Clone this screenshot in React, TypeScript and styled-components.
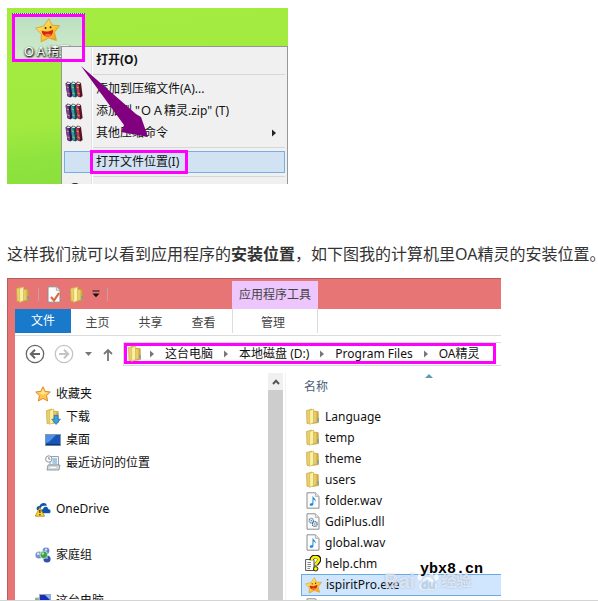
import React, { ReactNode } from "react";
import styled, { createGlobalStyle } from "styled-components";

const GlobalStyle = createGlobalStyle`
  * { box-sizing: border-box; }
  body {
    margin: 0;
    background: #fff;
    font-family: "Noto Sans", "Noto Sans CJK SC", sans-serif;
  }
  button { font: inherit; color: inherit; border: 0; background: none; padding: 0; margin: 0; text-align: left; }
  a { color: inherit; text-decoration: none; }
  svg { display: block; flex: none; }
`;

const Page = styled.main`
  height: 100vh;
  overflow: hidden;
  padding: 8px 0 0 7px;
  border-bottom: 1px solid #d4d4d4;
`;

const Paragraph = styled.p`
  margin: 58px 0 11px;
  font-size: 16px;
  line-height: 25px;
  color: #333;
  white-space: nowrap;
`;

/* Desktop with context menu */

const Desktop = styled.figure`
  position: relative;
  margin: 0;
  max-width: 281px;
  height: 176px;
  overflow: hidden;
  padding: 38px 0 0 54px;
  background: linear-gradient(172deg, #a5ec41 0%, #a3ea40 55%, #8fe33e 72%, #88dd3b 100%);
`;

const DesktopIcon = styled.div`
  position: absolute;
  left: 5px;
  top: 5px;
  width: 73px;
  height: 49px;
  padding: 4px 0 0 23px;
  background: linear-gradient(#b9dfc0, #d3edce);
  border-top: 1px dotted #3d6c86;
  color: #fff;
  font-size: 12px;
  line-height: 18px;
  white-space: nowrap;
  text-shadow: 0 1px 2px #000, 1px 1px 2px #000;
`;

const DesktopLabel = styled.div`
  margin-left: -12px;
`;

const Menu = styled.div`
  position: relative;
  height: 160px;
  padding: 2px;
  border: 1px solid #979797;
  background: linear-gradient(to right, transparent 29px, #e0e0e0 29px, #e0e0e0 30px, #fff 30px, #fff 31px, transparent 31px) #f0f0f0;
  font-size: 12px;
  color: #111;
`;

const MenuItem = styled.button<{ $active?: boolean; $strong?: boolean }>`
  display: grid;
  grid-template-columns: 26px 1fr 12px;
  align-items: center;
  width: 100%;
  height: 22px;
  line-height: 20px;
  white-space: nowrap;
  font-weight: ${(p) => (p.$strong ? 700 : 400)};
  border: 1px solid ${(p) => (p.$active ? "#78aee5" : "transparent")};
  background: ${(p) => (p.$active ? "#d1e2f2" : "none")};
`;

const MenuText = styled.span`
  padding-left: 5px;
`;

const MenuRule = styled.hr`
  height: 1px;
  margin: 3px 0 3px 29px;
  border: 0;
  background: #d7d7d7;
`;

const Highlight = styled.div<{ $x: number; $y: number; $w: number; $h: number }>`
  position: absolute;
  left: ${(p) => p.$x}px;
  top: ${(p) => p.$y}px;
  width: ${(p) => p.$w}px;
  height: ${(p) => p.$h}px;
  border: 3px solid #ff00ff;
  pointer-events: none;
`;

const ArrowLayer = styled.svg`
  position: absolute;
  left: 0;
  top: 0;
  pointer-events: none;
`;

/* Explorer window */

const Explorer = styled.figure`
  position: relative;
  display: flex;
  flex-direction: column;
  margin: 0;
  max-width: 494px;
  height: 340px;
  overflow: hidden;
  padding-left: 8px;
  border-top: 1px solid #b85c5c;
  background: #e87575;
  box-shadow: inset 1px 0 #b85c5c;
  font-size: 12px;
  color: #111;
`;

const TitleBar = styled.header`
  display: flex;
  flex: none;
  height: 30px;
`;

const QuickAccess = styled.div`
  display: flex;
  align-items: center;
  width: 217px;
  gap: 7px;
`;

const Divider = styled.span`
  width: 1px;
  height: 13px;
  background: #c9a0a0;
`;

const ContextTitle = styled.div`
  width: 86px;
  margin-top: 2px;
  line-height: 28px;
  text-align: center;
  background: #ecc6fc;
  color: #444;
`;

const Tabs = styled.nav`
  display: flex;
  flex: none;
  height: 27px;
  background: #fff;
  border-bottom: 1px solid #dadbdc;
  color: #444;
`;

const Tab = styled.button<{ $kind?: "file" | "context" }>`
  width: ${(p) => (p.$kind === "file" ? 56 : p.$kind === "context" ? 86 : 53)}px;
  height: 24px;
  line-height: ${(p) => (p.$kind === "file" ? 24 : 28)}px;
  text-align: center;
  ${(p) => p.$kind === "file" && "background: #1979ca; color: #fff;"}
  ${(p) =>
    p.$kind === "context" &&
    "border: solid #dcdcdc; border-width: 0 1px; margin-left: 2px; padding-right: 4px;"}
`;

const AddressRow = styled.div`
  display: flex;
  flex: none;
  align-items: center;
  height: 37px;
  padding: 0 0 1px 10px;
  background: #fff;
`;

const NavButton = styled.button<{ $w: number }>`
  display: flex;
  justify-content: center;
  width: ${(p) => p.$w}px;
`;

const AddressBox = styled.div`
  flex: 1;
  height: 24px;
  padding-right: 5px;
  border: 1px solid #dadada;
  border-right: 0;
`;

const Breadcrumbs = styled.nav`
  display: flex;
  align-items: center;
  height: 21px;
  border: 3px solid #ff00ff;
  line-height: 15px;
  white-space: nowrap;
`;

const Crumb = styled.a`
  display: flex;
  align-items: center;
  gap: 11px;
  padding-left: 11px;

  &:first-of-type {
    padding-left: 7px;
  }
`;

const Body = styled.div`
  display: flex;
  flex: 1;
  background: #fff;
`;

const Sidebar = styled.nav`
  width: 253px;
  padding: 9px 0 0 20px;
`;

const SideItem = styled.a<{ $child?: boolean; $gap?: boolean }>`
  display: flex;
  align-items: center;
  gap: 5px;
  height: 23px;
  padding-left: ${(p) => (p.$child ? 10 : 0)}px;
  margin-top: ${(p) => (p.$gap ? 23 : 0)}px;
  line-height: 20px;
`;

const ScrollTrack = styled.div`
  width: 15px;
  background: #cdcdcd;
`;

const ScrollButton = styled.button`
  display: flex;
  justify-content: center;
  align-items: center;
  width: 15px;
  height: 17px;
  background: #f0f0f0;
`;

const Files = styled.section`
  flex: 1;
  margin-left: 2px;
  border-left: 1px solid #f2f2f2;
  padding-left: 15px;
`;

const FileHeader = styled.button`
  display: flex;
  gap: 97px;
  width: 100%;
  height: 33px;
  padding-left: 3px;
  line-height: 27px;
  color: #4c607a;
`;

const SortMark = styled.span`
  padding-top: 1px;
`;

const FileRow = styled.a<{ $selected?: boolean }>`
  display: flex;
  align-items: center;
  gap: 4px;
  height: ${(p) => (p.$selected ? 22 : 21)}px;
  padding-left: 3px;
  line-height: 20px;
  border: 1px solid ${(p) => (p.$selected ? "#6aaae4" : "transparent")};
  border-right: 0;
  background: ${(p) => (p.$selected ? "#d0e6ff" : "none")};
`;

const Watermark = styled.div`
  position: absolute;
  left: 377px;
  top: 287px;
  display: flex;
  align-items: flex-end;
  gap: 1px;
  font: 700 20px/24px "Liberation Sans", "Noto Sans CJK SC", sans-serif;
  color: rgba(255, 255, 255, 0.6);
  text-shadow: 0 0 2px rgba(120, 140, 170, 0.6);
  pointer-events: none;
`;

const WatermarkSmall = styled.span`
  font-size: 15px;
`;

const SiteMark = styled.div`
  position: absolute;
  left: 413px;
  top: 281px;
  font: 700 15px/20px "Liberation Mono", monospace;
  color: #000;
  pointer-events: none;
`;

/* Icons */

const STAR = "M9 0.8 11.4 6 17.2 6.8 13 10.8 14.2 16.8 9 14 3.8 16.8 5 10.8 0.8 6.8 6.6 6Z";
const FAT_STAR = "M10 0.6 12.2 5.2 17.6 5.6 14 10.2 15.4 16.2 9.8 14.4 4.4 17.2 4.6 11.4 0.5 7.4 6.4 5.8Z";

const SmileStar = ({ size }: { size: number }) => (
  <svg width={size} height={size} viewBox="0 0 18 18">
    <defs>
      <linearGradient id={"smile" + size} x1="0" y1="0" x2="1" y2="1">
        <stop offset="0" stopColor="#fff08a" />
        <stop offset="0.6" stopColor="#fdc52e" />
        <stop offset="1" stopColor="#ef8a16" />
      </linearGradient>
    </defs>
    <path d={FAT_STAR} fill={`url(#smile${size})`} stroke="#dc9a2c" strokeWidth="0.6" strokeLinejoin="round" />
    <path d="M4.8 9C7.6 10.4 10.6 9.8 13 8.2 13.2 11.4 11.6 13.4 9 13.4 6.6 13.4 4.8 11.4 4.8 9Z" fill="#d3260f" />
    <path d="M6.8 12.1C8 11.2 10.2 11.1 11.8 11.9 10.6 13.7 8.2 13.8 6.8 12.1Z" fill="#ff6a45" />
    <circle cx="7.6" cy="7.2" r="0.7" fill="#43200a" />
    <circle cx="11.2" cy="6.6" r="0.7" fill="#43200a" />
  </svg>
);

const Books = () => (
  <svg width="18" height="17" viewBox="0 0 18 17">
    {[
      ["#7a3f9a", "#33154a", 0],
      ["#2f9aa0", "#0d4c54", 5],
      ["#c03c58", "#551323", 10],
    ].map(([c, d, x]) => (
      <g key={String(x)} transform={`translate(${x} 0)`}>
        <path d="M0.5 2.4 2.8 0.6 6 2 7.6 15 5.4 16.6 2.4 15.2Z" fill={String(d)} />
        <path d="M0.9 2.8 3.6 3.8 5.2 15.8 2.6 14.8Z" fill={String(c)} />
        <path d="M1.4 2.4 3 1.2 5.4 2.2 4 3.3Z" fill="#f4f1e6" />
        <path d="M1.6 6 3.8 6.7M2.4 12 4.6 12.6" stroke="#e2c25a" strokeWidth="0.8" />
      </g>
    ))}
  </svg>
);

const Folder = ({ arrow }: { arrow?: boolean }) => (
  <svg width="16" height="17" viewBox="0 0 16 17">
    <path d="M1.5 2.5 7 1 7 15 2 15.5Z" fill="#e9d06c" stroke="#c9a53c" strokeWidth="0.7" />
    <path d="M8 3 13.2 3.6 13.6 14.6 7.5 15.5Z" fill="#d3ac40" stroke="#bf9735" strokeWidth="0.6" />
    <path d="M4.6 2.6 8.6 1.1 8.6 14.6 4.6 16.4Z" fill="#fbf0a8" stroke="#d6b952" strokeWidth="0.7" />
    <path d="M9 4 11.4 3.5 11.4 13.4 9 14.4Z" fill="#e8cd66" />
    {arrow ? (
      <path d="M9.2 7.2H13V11.2H15.4L11.1 16.4 6.8 11.2H9.2Z" fill="#38a0e0" stroke="#1a6aa8" strokeWidth="0.7" />
    ) : (
      <path d="M13 10V13.5" stroke="#4ba3d8" strokeWidth="1.2" />
    )}
  </svg>
);

const Sheet = ({ children }: { children?: ReactNode }) => (
  <svg width="16" height="17" viewBox="0 0 16 17">
    <path d="M2 0.8H10.4L14 4.4V16.2H2Z" fill="#fbfbfb" stroke="#8e8e8e" />
    <path d="M10.4 0.8V4.4H14" fill="#e4e4e4" stroke="#a8a8a8" strokeWidth="0.8" />
    {children}
  </svg>
);

const AudioFile = () => (
  <Sheet>
    <path d="M7.6 3.6C8.2 6 11 6.5 10.7 9.8 10.2 8.4 9.4 7.8 8.4 7.5V12.2Q8 14 6 13.8C4.2 13.6 4.4 11.2 6.5 11.2H7.4Z" fill="#1688d8" />
  </Sheet>
);

const LibraryFile = () => (
  <Sheet>
    <circle cx="6.3" cy="7.6" r="2.2" fill="none" stroke="#5e86ae" strokeWidth="1.3" strokeDasharray="1.2 0.5" />
    <circle cx="6.3" cy="7.6" r="0.8" fill="#5e86ae" />
    <circle cx="9.8" cy="11" r="2.4" fill="none" stroke="#41678f" strokeWidth="1.3" strokeDasharray="1.2 0.5" />
    <circle cx="9.8" cy="11" r="0.9" fill="#8fb0d0" />
  </Sheet>
);

const HelpFile = () => (
  <svg width="16" height="17" viewBox="0 0 16 17">
    <path d="M0.6 4.5H9V15.5H0.6Z" fill="#fff" stroke="#555" />
    <path d="M2.4 7.5H6M2.4 9.5H6M2.4 11.5H6M2.4 13.4H5" stroke="#666" strokeWidth="0.8" />
    <path d="M6.4 5.2C6.3 0.4 14.2 0.2 14.3 4.6 14.3 7.4 11.2 7.6 11.2 10.4" fill="none" stroke="#111" strokeWidth="4" />
    <path d="M6.8 5.2C6.8 1.2 13.8 1 13.9 4.6 13.8 7.2 10.9 7.4 10.9 10" fill="none" stroke="#fff200" strokeWidth="2.5" />
    <circle cx="10.7" cy="13.8" r="2.2" fill="#fff200" stroke="#111" strokeWidth="0.9" />
  </svg>
);

const FavStar = () => (
  <svg width="16" height="16" viewBox="0 0 18 18">
    <path d={STAR} fill="#ffc84a" stroke="#e4812a" strokeWidth="1.1" strokeLinejoin="round" />
    <path d="M9 3 10.5 7 14.5 7.6 9 9.6 3.6 7.6 7.5 7Z" fill="#ffe9a0" />
  </svg>
);

const Monitor = () => (
  <svg width="16" height="16" viewBox="0 0 16 16">
    <rect x="0.5" y="2.5" width="15" height="11" fill="#1756b5" stroke="#8297b4" />
    <path d="M1 3H11L4 10 1 11Z" fill="#4f8fe4" />
    <path d="M1 12.7H15" stroke="#0d2d62" />
  </svg>
);

const Recent = () => (
  <svg width="16" height="16" viewBox="0 0 16 16">
    <path d="M5 1.5H13.5V10H5Z" fill="#f5f8fa" stroke="#96a3ad" />
    <path d="M7.5 4H12M7.5 6H12M7.5 8H12" stroke="#4d9bd2" />
    <path d="M3 10H15L14 15H2Z" fill="#d3d8dc" stroke="#929ca4" />
    <path d="M5 12.5H11" stroke="#fff" />
    <circle cx="3.8" cy="4" r="3.2" fill="#fff" stroke="#8b98a3" />
    <path d="M3.8 2V4.2H5.4" fill="none" stroke="#66727d" strokeWidth="0.8" />
  </svg>
);

const Cloud = () => (
  <svg width="16" height="16" viewBox="0 0 16 16">
    <path d="M2 9C.8 6.6 2.4 4.7 4.5 5 5.8 1.4 11 .8 12 4.5L7 5 4 9.5Z" fill="#0b55ae" />
    <path d="M5 12.5C4 9.8 5.8 8 7.7 8.1 8.3 4.8 13 4.3 13.6 8.1 16.3 8 16.7 12.5 14 12.5Z" fill="#0b55ae" stroke="#fff" strokeWidth="0.6" />
    <path d="M4.8 6.5 9.6 15.2H0.2Z" fill="#ffd633" stroke="#a58615" strokeWidth="0.8" />
    <path d="M4.9 9V12.1M4.9 13.1V14.2" stroke="#222" strokeWidth="1.2" />
  </svg>
);

const HomeGroup = () => (
  <svg width="16" height="16" viewBox="0 0 16 16">
    <circle cx="4" cy="8" r="3.6" fill="#7a93d0" />
    <circle cx="11" cy="3.8" r="3.4" fill="#6586d3" />
    <circle cx="12" cy="12" r="3.6" fill="#344fae" />
    <circle cx="8.8" cy="7.8" r="3.8" fill="#39a24b" stroke="#e7f5e7" strokeWidth="0.7" />
    <circle cx="7.8" cy="6.6" r="1.3" fill="#a5e2a4" />
    <circle cx="3.2" cy="6.8" r="1.3" fill="#dce5fa" />
    <circle cx="11" cy="2.6" r="1.2" fill="#d9e4fb" />
    <circle cx="12" cy="11" r="1" fill="#95a8e6" />
  </svg>
);

const Computer = () => (
  <svg width="16" height="16" viewBox="0 0 16 16">
    <path d="M0.5 5H4V14H0.5Z" fill="#bcc5ca" stroke="#7c878e" strokeWidth="0.6" />
    <rect x="1" y="6" width="1.8" height="2" fill="#57bd47" />
    <rect x="4.5" y="1.5" width="11" height="9" fill="#1530b4" stroke="#9fa9b5" />
    <path d="M10 2H15V7Z" fill="#8ab5f3" />
    <path d="M7 11H12L13 14H6Z" fill="#9ca6ad" />
  </svg>
);

const Disc = () => (
  <svg width="18" height="18" viewBox="0 0 18 18">
    <circle cx="10" cy="8" r="6" fill="#fff" stroke="#222" strokeWidth="2" />
  </svg>
);

const Chevron = ({ color = "#777" }: { color?: string }) => (
  <svg width="4" height="8" viewBox="0 0 4 8">
    <path d="M0 0.5 4 4 0 7.5Z" fill={color} />
  </svg>
);

const CircleArrow = ({ color, flip }: { color: string; flip?: boolean }) => (
  <svg width="20" height="20" viewBox="0 0 20 20">
    <g transform={flip ? "rotate(180 10 10)" : undefined} fill="none" stroke={color}>
      <circle cx="10" cy="10" r="8.7" strokeWidth="1.3" />
      <path d="M15 10H6M10 5.8 5.8 10 10 14.2" strokeWidth="2" />
    </g>
  </svg>
);

const Paw = () => (
  <svg width="24" height="27" viewBox="0 0 24 26">
    <g fill="#fff" fillOpacity="0.75" stroke="#a8b8cc" strokeOpacity="0.5" strokeWidth="0.6">
      <ellipse cx="3.8" cy="11" rx="2.8" ry="3.6" />
      <ellipse cx="9" cy="5" rx="2.8" ry="4" />
      <ellipse cx="15.5" cy="5" rx="2.8" ry="4" />
      <ellipse cx="20.5" cy="11" rx="2.8" ry="3.6" />
      <path d="M12 10C16 10 17 14 20 16.5 23 20 20 24.5 16 24.3 13 23.5 11 23.5 8 24.3 4 24.5 1 20 4 16.5 7 14 8 10 12 10Z" />
    </g>
    <text x="5" y="22" fontSize="12" fontWeight="700" fontFamily="Liberation Sans" fill="#b9d2ee">du</text>
  </svg>
);

const files: { name: string; icon: ReactNode; selected?: boolean }[] = [
  { name: "Language", icon: <Folder /> },
  { name: "temp", icon: <Folder /> },
  { name: "theme", icon: <Folder /> },
  { name: "users", icon: <Folder /> },
  { name: "folder.wav", icon: <AudioFile /> },
  { name: "GdiPlus.dll", icon: <LibraryFile /> },
  { name: "global.wav", icon: <AudioFile /> },
  { name: "help.chm", icon: <HelpFile /> },
  { name: "ispiritPro.exe", icon: <SmileStar size={17} />, selected: true },
  { name: "ispiritPro.dll", icon: <Sheet /> },
];

const places: { name: string; icon: ReactNode; child?: boolean; gap?: boolean }[] = [
  { name: "收藏夹", icon: <FavStar /> },
  { name: "下载", icon: <Folder arrow />, child: true },
  { name: "桌面", icon: <Monitor />, child: true },
  { name: "最近访问的位置", icon: <Recent />, child: true },
  { name: "OneDrive", icon: <Cloud />, gap: true },
  { name: "家庭组", icon: <HomeGroup />, gap: true },
  { name: "这台电脑", icon: <Computer />, gap: true },
];

export default function App() {
  return (
    <>
      <GlobalStyle />
      <Page>
        <Desktop>
          <DesktopIcon>
            <SmileStar size={25} />
            <DesktopLabel>ＯＡ精灵</DesktopLabel>
          </DesktopIcon>
          <Menu>
            <MenuItem $strong><span /><MenuText>打开(O)</MenuText></MenuItem>
            <MenuRule />
            <MenuItem><Books /><MenuText>添加到压缩文件(A)...</MenuText></MenuItem>
            <MenuItem><Books /><MenuText>添加到 "ＯＡ精灵.zip" (T)</MenuText></MenuItem>
            <MenuItem><Books /><MenuText>其他压缩命令</MenuText><Chevron color="#222" /></MenuItem>
            <MenuRule />
            <MenuItem $active><span /><MenuText>打开文件位置(I)</MenuText></MenuItem>
            <MenuRule />
            <MenuItem aria-label="更多"><Disc /></MenuItem>
          </Menu>
          <Highlight $x={5} $y={6} $w={73} $h={48} />
          <Highlight $x={83} $y={142} $w={98} $h={24} />
          <ArrowLayer width="281" height="176" viewBox="0 0 281 176">
            <path d="M74 58 129 106 134 109 141 129 114 124 117 117Z" fill="#800080" />
          </ArrowLayer>
        </Desktop>

        <Paragraph>
          这样我们就可以看到应用程序的<strong>安装位置</strong>，如下图我的计算机里OA精灵的安装位置。
        </Paragraph>

        <Explorer>
          <TitleBar>
            <QuickAccess>
              <Folder />
              <Divider />
              <Sheet>
                <path d="M5 11 8 14.5 13 7" fill="none" stroke="#e0643c" strokeWidth="2.2" />
              </Sheet>
              <Folder />
              <svg width="8" height="8" viewBox="0 0 8 8">
                <path d="M0.5 1H7.5" stroke="#111" />
                <path d="M0.5 3.5H7.5L4 7.2Z" fill="#111" />
              </svg>
              <Divider />
            </QuickAccess>
            <ContextTitle>应用程序工具</ContextTitle>
          </TitleBar>
          <Tabs>
            <Tab $kind="file">文件</Tab>
            <Tab>主页</Tab>
            <Tab>共享</Tab>
            <Tab>查看</Tab>
            <Tab $kind="context">管理</Tab>
          </Tabs>
          <AddressRow>
            <NavButton $w={20} aria-label="后退"><CircleArrow color="#666" /></NavButton>
            <NavButton $w={38} aria-label="前进"><CircleArrow color="#c4c4c4" flip /></NavButton>
            <NavButton $w={10} aria-label="历史">
              <svg width="7" height="4" viewBox="0 0 7 4"><path d="M0 0H7L3.5 4Z" fill="#777" /></svg>
            </NavButton>
            <NavButton $w={30} aria-label="向上">
              <svg width="10" height="13" viewBox="0 0 10 13">
                <path d="M5 13V2M1 6 5 2 9 6" fill="none" stroke="#777" strokeWidth="1.8" />
              </svg>
            </NavButton>
            <AddressBox>
              <Breadcrumbs>
                <Folder />
                <Crumb href="#"><Chevron />这台电脑</Crumb>
                <Crumb href="#"><Chevron />本地磁盘 (D:)</Crumb>
                <Crumb href="#"><Chevron />Program Files</Crumb>
                <Crumb href="#"><Chevron />OA精灵</Crumb>
              </Breadcrumbs>
            </AddressBox>
          </AddressRow>
          <Body>
            <Sidebar>
              {places.map((p) => (
                <SideItem key={p.name} href="#" $child={p.child} $gap={p.gap}>
                  {p.icon}
                  {p.name}
                </SideItem>
              ))}
            </Sidebar>
            <ScrollTrack>
              <ScrollButton aria-label="向上滚动">
                <svg width="8" height="6" viewBox="0 0 8 6"><path d="M1 5 4 1.8 7 5" fill="none" stroke="#555" strokeWidth="2" /></svg>
              </ScrollButton>
            </ScrollTrack>
            <Files>
              <FileHeader>
                名称
                <SortMark>
                  <svg width="8" height="4" viewBox="0 0 8 4"><path d="M0 4 4 0 8 4Z" fill="#5b9bb8" /></svg>
                </SortMark>
              </FileHeader>
              {files.map((f) => (
                <FileRow key={f.name} href="#" $selected={f.selected}>
                  {f.icon}
                  {f.name}
                </FileRow>
              ))}
            </Files>
          </Body>
          <Watermark>Bai<Paw /><WatermarkSmall>经验</WatermarkSmall></Watermark>
          <SiteMark>ybx8.cn</SiteMark>
        </Explorer>
      </Page>
    </>
  );
}
